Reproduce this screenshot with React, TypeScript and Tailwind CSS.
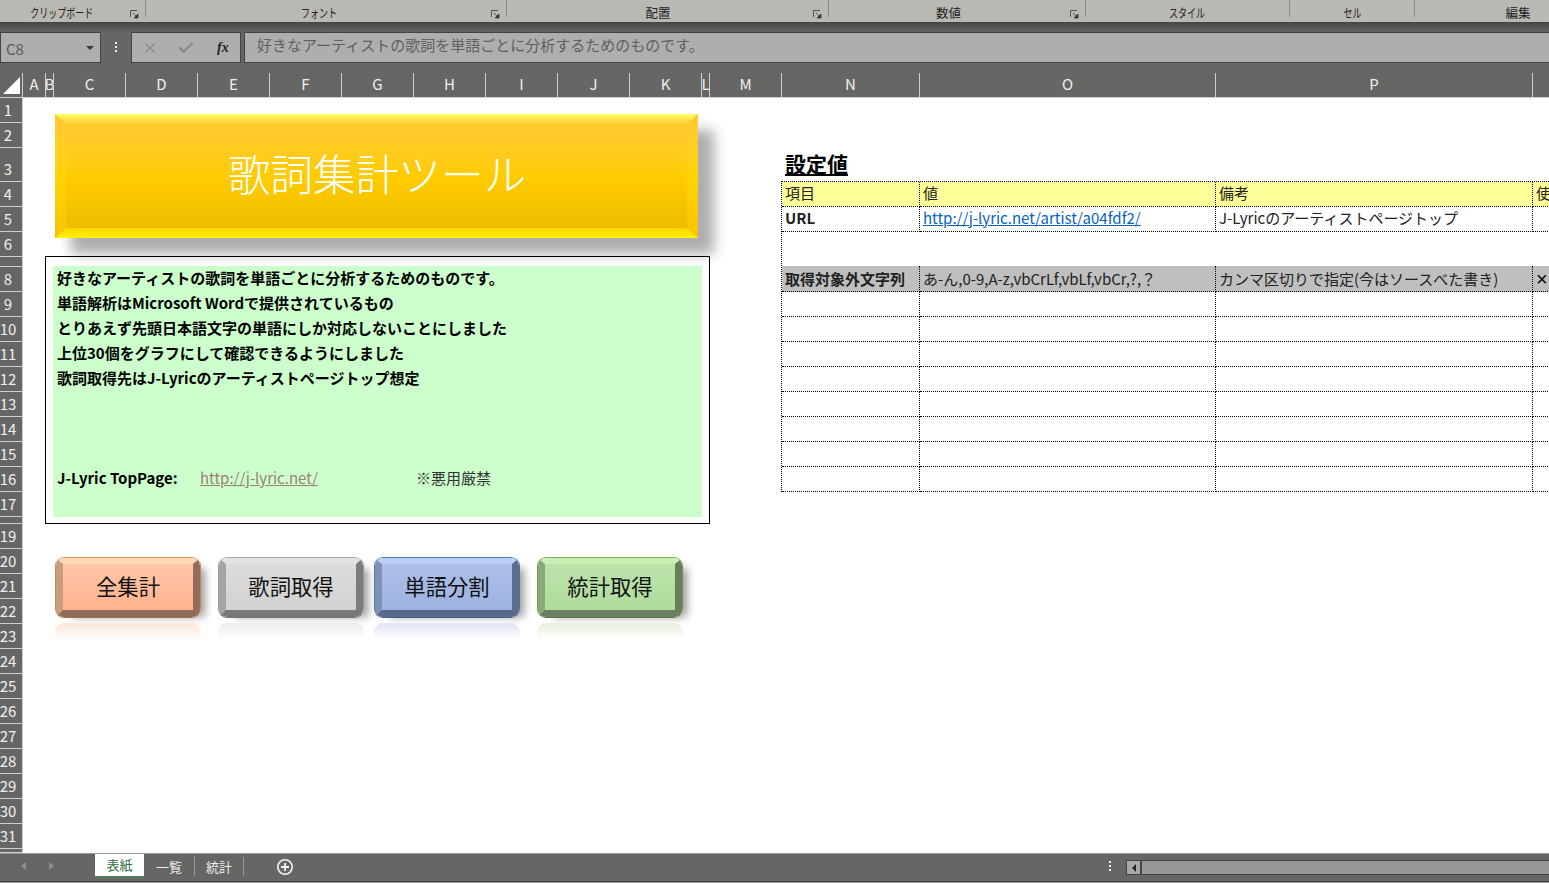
import { Check, X } from "lucide-react";

const ribbonGroups = [
    { label: "クリップボード", width: 146, launcher: true, narrow: true, shift: "pr-[22px]" },
    { label: "フォント", width: 361, launcher: true, narrow: true, shift: "pr-[14px]" },
    { label: "配置", width: 322, launcher: true, narrow: false, shift: "pr-[20px]" },
    { label: "数値", width: 257, launcher: true, narrow: false, shift: "pr-[18px]" },
    { label: "スタイル", width: 204, launcher: false, narrow: true, shift: "pr-[2px]" },
    { label: "セル", width: 125, launcher: false, narrow: true, shift: "" },
    { label: "編集", width: 134, launcher: false, narrow: false, shift: "pl-[72px]" },
];

const columns = [
    { name: "A", width: 23 },
    { name: "B", width: 8 },
    { name: "C", width: 72 },
    { name: "D", width: 72 },
    { name: "E", width: 72 },
    { name: "F", width: 72 },
    { name: "G", width: 72 },
    { name: "H", width: 72 },
    { name: "I", width: 72 },
    { name: "J", width: 72 },
    { name: "K", width: 72 },
    { name: "L", width: 8 },
    { name: "M", width: 72 },
    { name: "N", width: 138 },
    { name: "O", width: 296 },
    { name: "P", width: 317 },
];

const rowHeights: [string, number][] = [
    ["1", 25], ["2", 25], ["3", 34], ["4", 25], ["5", 25], ["6", 25], ["", 10],
    ["8", 25], ["9", 25], ["10", 25], ["11", 25], ["12", 25], ["13", 25], ["14", 25],
    ["15", 25], ["16", 25], ["17", 25], ["", 7], ["19", 25], ["20", 25], ["21", 25],
    ["22", 25], ["23", 25], ["24", 25], ["25", 25], ["26", 25], ["27", 25], ["28", 25],
    ["29", 25], ["30", 25], ["31", 25], ["", 4],
];

const descLines = [
    "好きなアーティストの歌詞を単語ごとに分析するためのものです。",
    "単語解析はMicrosoft Wordで提供されているもの",
    "とりあえず先頭日本語文字の単語にしか対応しないことにしました",
    "上位30個をグラフにして確認できるようにしました",
    "歌詞取得先はJ-Lyricのアーティストページトップ想定",
];

const buttons = [
    {
        label: "全集計",
        border: "border-t-[#f0994f] border-x-[#c98a50] border-b-[#a96f3d]",
        bevel: "border-t-[#ffd6b8] border-l-[#c89f7a] border-r-[#966a5c] border-b-[#8f6b58]",
        face: "from-[#ffc6a8] to-[#ffb28e]",
        reflect: "from-[#fbe6d6]",
    },
    {
        label: "歌詞取得",
        border: "border-t-[#aaaaaa] border-x-[#999999] border-b-[#777777]",
        bevel: "border-t-[#e2e2e2] border-l-[#a3a5a3] border-r-[#7b7d7b] border-b-[#777977]",
        face: "from-[#dcdcdc] to-[#d2d2d2]",
        reflect: "from-[#ececec]",
    },
    {
        label: "単語分割",
        border: "border-t-[#4f81bd] border-x-[#4a76aa] border-b-[#3f6691]",
        bevel: "border-t-[#bccef3] border-l-[#7f92b2] border-r-[#5e6b8c] border-b-[#586a8a]",
        face: "from-[#aebfe8] to-[#9db2e2]",
        reflect: "from-[#dfe4f5]",
    },
    {
        label: "統計取得",
        border: "border-t-[#80a85c] border-x-[#729650] border-b-[#5a7a44]",
        bevel: "border-t-[#c8efb4] border-l-[#8aa87a] border-r-[#687f5c] border-b-[#6a8060]",
        face: "from-[#bce3aa] to-[#b0dc9e]",
        reflect: "from-[#e6f0de]",
    },
];

const Launcher = () => (
    <svg width="9" height="9" viewBox="0 0 9 9" className="absolute right-[7px] top-[10px]">
        <path d="M0.5 7V0.5H7" fill="none" stroke="#555" />
        <path d="M3 3L7 7M8 4V8H4Z" fill="#333" stroke="#333" strokeWidth="0.7" />
    </svg>
);

const Ribbon = () => (
    <div className="flex h-[22px] bg-[#b9b8b3] text-[#222]">
        {ribbonGroups.map((group, i) => (
            <div
                key={group.label}
                style={{ width: group.width }}
                className={`relative flex shrink-0 justify-center ${group.shift}`}
            >
                <span
                    className={`inline-block pt-[4px] text-[12.5px] leading-[18px] ${group.narrow ? "scale-x-[0.72]" : ""}`}
                >
                    {group.label}
                </span>
                {group.launcher && <Launcher />}
                {i < ribbonGroups.length - 1 && (
                    <div className="absolute right-0 top-0 h-[17px] w-px bg-[#8c8b87]" />
                )}
            </div>
        ))}
    </div>
);

const FormulaBar = () => (
    <div className="flex h-[41px] items-start bg-[#666664]">
        <div className="flex h-[31px] w-[101px] shrink-0 items-center justify-between border border-[#444] bg-[#aeaeae] pl-[5px] pr-[6px] text-[15px] text-[#5a5a5a]">
            <span className="pt-[4px]">C8</span>
            <span className="h-0 w-0 border-x-[4px] border-t-[4px] border-x-transparent border-t-[#3c3c3c]" />
        </div>
        <div className="flex w-[30px] shrink-0 flex-col items-center gap-[2px] pt-[10px]">
            <span className="h-[2px] w-[2px] bg-[#eee]" />
            <span className="h-[2px] w-[2px] bg-[#eee]" />
            <span className="h-[2px] w-[2px] bg-[#eee]" />
        </div>
        <div className="flex h-[31px] w-[110px] shrink-0 items-center border border-[#444] bg-[#aeaeae] pl-[10px]">
            <X size={16} strokeWidth={1.75} className="text-[#858585]" />
            <Check size={18} strokeWidth={2.75} className="ml-[19px] text-[#858585]" />
            <span className="ml-[22px] font-['Liberation_Serif',serif] text-[14px] font-bold italic text-[#222]">
                fx
            </span>
        </div>
        <div className="ml-[3px] flex h-[31px] flex-1 items-center border border-[#444] border-r-0 bg-[#aeaeae] pb-[5px] pl-[12px] text-[15px] text-[#606060]">
            {descLines[0]}
        </div>
    </div>
);

const ColumnHeader = () => (
    <div className="flex h-[25px] border-b border-[#cfcfcf] bg-[#666664]">
        <div className="relative h-[24px] w-[23px] shrink-0 border-r border-[#cfcfcf]">
            <div className="absolute left-[3px] top-[4px] h-[17px] w-[17px] bg-white [clip-path:polygon(100%_0,100%_100%,0_100%)]" />
        </div>
        {columns.map((col) => (
            <div
                key={col.name}
                style={{ width: col.width }}
                className="flex shrink-0 items-center justify-center overflow-hidden border-r border-[#cfcfcf] pb-[4px] text-[15px] leading-none text-[#f0f0f0]"
            >
                {col.name}
            </div>
        ))}
    </div>
);

const RowHeader = () => (
    <div className="w-[23px] shrink-0 border-r border-[#cfcfcf] bg-[#666664]">
        {rowHeights.map(([name, height], i) => (
            <div
                key={i}
                style={{ height }}
                className="flex items-end justify-center overflow-hidden border-b border-[#cfcfcf] pr-[6px] text-[15px] leading-[15px] text-[#f0f0f0]"
            >
                {name && <span className="pb-[5px]">{name}</span>}
            </div>
        ))}
    </div>
);

const Banner = () => (
    <div className="relative flex h-[124px] w-[643px] items-center justify-center bg-linear-to-b from-[#ffc933] via-[#ffcc00] to-[#ecb900] pb-[6px] pl-[1px] shadow-[16px_16px_12px_rgba(0,0,0,0.32)]">
        <div className="absolute inset-x-0 top-0 h-[10px] bg-linear-to-b from-[#ffff66] to-[#ffca33] [clip-path:polygon(0_0,100%_0,calc(100%-10px)_100%,10px_100%)]" />
        <div className="absolute inset-x-0 bottom-0 h-[10px] bg-linear-to-b from-[#ffd400] to-[#fff200] [clip-path:polygon(10px_0,calc(100%-10px)_0,100%_100%,0_100%)]" />
        <div className="absolute inset-y-0 left-0 w-[11px] bg-linear-to-b from-[#ffc933] via-[#ffd400] to-[#f5c400] [clip-path:polygon(0_0,100%_10px,100%_calc(100%-10px),0_100%)]" />
        <div className="absolute inset-y-0 right-0 w-[11px] bg-linear-to-b from-[#ffc933] via-[#ffd400] to-[#f5c400] [clip-path:polygon(0_10px,100%_0,100%_100%,0_calc(100%-10px))]" />
        <span className="relative text-[42.67px] font-light leading-none text-white">
            歌詞集計ツール
        </span>
    </div>
);

const Description = () => (
    <div className="mt-[18px] h-[268px] w-[665px] border border-black bg-white px-[7px] pt-[9px]">
        <div className="h-[251px] bg-[#ccffcc] pl-[4px] text-[15px] leading-[25px] text-black">
            <div className="-translate-y-px">
                <div className="font-bold">
                    {descLines.map((line) => (
                        <div key={line} className="h-[25px] whitespace-nowrap">
                            {line}
                        </div>
                    ))}
                </div>
                <div className="mt-[75px] flex">
                    <span className="w-[143px] font-bold">J-Lyric TopPage:</span>
                    <span className="w-[216px] text-[#9c7f78] underline">http://j-lyric.net/</span>
                    <span className="text-[#333]">※悪用厳禁</span>
                </div>
            </div>
        </div>
    </div>
);

const ButtonRow = () => (
    <div className="mt-[33px] flex gap-[17px]">
        {buttons.map((btn, i) => (
            <div key={btn.label} className={`w-[146px] ${i === 2 ? "ml-[-7px]" : ""}`}>
                <div
                    className={`h-[61px] overflow-hidden rounded-[9px] border shadow-[10px_5px_8px_-6px_rgba(0,0,0,0.4)] ${btn.border}`}
                >
                    <div
                        className={`flex h-full items-center justify-center rounded-[7px] border-x-[7px] border-b-[7px] border-t-[6px] bg-linear-to-b pb-[2px] text-[21.33px] leading-none text-[#111] ${btn.bevel} ${btn.face}`}
                    >
                        {btn.label}
                    </div>
                </div>
                <div
                    className={`mt-[5px] h-[17px] rounded-t-[9px] bg-linear-to-b to-white ${btn.reflect}`}
                />
            </div>
        ))}
    </div>
);

const CELL = "flex items-center overflow-hidden whitespace-nowrap border-b border-r border-dotted border-black pl-[3px] text-[15px] leading-none text-[#222]";

const SettingRow = ({
    cells,
    bg = "",
    firstBold = false,
    tall = false,
    lift = false,
}: {
    cells: React.ReactNode[];
    bg?: string;
    firstBold?: boolean;
    tall?: boolean;
    lift?: boolean;
}) => (
    <div className={`grid grid-cols-[138px_296px_317px_17px] ${tall ? "h-[26px]" : "h-[25px]"} ${bg}`}>
        {cells.map((cell, i) => (
            <div
                key={i}
                className={`${CELL} ${i === 0 && firstBold ? "font-bold" : ""} ${lift ? "pb-[4px]" : ""}`}
            >
                {cell}
            </div>
        ))}
    </div>
);

const SettingsTable = () => (
    <div className="ml-[71px] w-[768px] shrink-0 pt-[49px]">
        <div className="flex h-[34px] items-end pb-[4px] pl-[4px]">
            <span className="text-[21px] font-bold leading-[28px] text-black underline">設定値</span>
        </div>
        <div className="border-l border-t border-dotted border-black">
            <SettingRow lift bg="bg-[#ffff99]" cells={["項目", "値", "備考", "使"]} />
            <SettingRow
                lift
                firstBold
                cells={[
                    "URL",
                    <span className="text-[#0563c1] underline">http://j-lyric.net/artist/a04fdf2/</span>,
                    "J-Lyricのアーティストページトップ",
                    "",
                ]}
            />
            <div className="h-[34px]" />
            <SettingRow
                tall
                bg="bg-[#bfbfbf]"
                firstBold
                cells={[
                    "取得対象外文字列",
                    "あ-ん,0-9,A-z,vbCrLf,vbLf,vbCr,?,？",
                    "カンマ区切りで指定(今はソースべた書き)",
                    <span className="font-['Liberation_Sans',sans-serif] text-[20px] text-black">×</span>,
                ]}
            />
            {Array.from({ length: 8 }).map((_, i) => (
                <SettingRow key={i} cells={["", "", "", ""]} />
            ))}
        </div>
    </div>
);

const TabBar = () => (
    <div className="h-[30px] bg-[#999]">
        <div className="flex h-[29px] items-start border-y border-t-[#999] border-b-[#3f3f3f] bg-[#666664] text-[13px] text-[#f0f0f0]">
            <div className="flex h-[24px] w-[95px] shrink-0 items-center pl-[21px]">
                <span className="h-0 w-0 border-y-[4px] border-r-[5px] border-y-transparent border-r-[#8f8f8d]" />
                <span className="ml-[23px] h-0 w-0 border-y-[4px] border-l-[5px] border-y-transparent border-l-[#8f8f8d]" />
            </div>
            <div className="flex h-[24px] w-[49px] shrink-0 items-center justify-center border-b-2 border-[#4f7a55] bg-white text-[#2f6b45]">
                表紙
            </div>
            <div className="mt-[3px] flex h-[19px] w-[51px] shrink-0 items-center justify-center border-r border-[#999]">一覧</div>
            <div className="mt-[3px] flex h-[19px] w-[49px] shrink-0 items-center justify-center border-r border-[#999]">統計</div>
            <svg width="18" height="18" viewBox="0 0 18 18" className="ml-[32px] mt-[4px] shrink-0">
                <circle cx="9" cy="9" r="7.2" fill="none" stroke="#f4f4f4" strokeWidth="1.6" />
                <path d="M9 5v8M5 9h8" stroke="#f4f4f4" strokeWidth="1.8" />
            </svg>
            <div className="ml-auto flex items-start">
                <div className="mr-[15px] flex flex-col gap-[2px] pt-[7px]">
                    <span className="h-[2px] w-[2px] bg-[#eee]" />
                    <span className="h-[2px] w-[2px] bg-[#eee]" />
                    <span className="h-[2px] w-[2px] bg-[#eee]" />
                </div>
                <div className="mt-[6px] flex h-[15px] w-[423px] border-y border-l border-[#444] bg-[#969694]">
                    <div className="flex w-[15px] items-center justify-center border-r-2 border-[#444] bg-[#a8a8a6]">
                        <span className="h-0 w-0 border-y-[4px] border-r-[4px] border-y-transparent border-r-[#222]" />
                    </div>
                </div>
            </div>
        </div>
    </div>
);

export default function App() {
    return (
        <div className="flex h-[883px] w-[1549px] flex-col overflow-hidden bg-white font-['Noto_Sans_CJK_JP',sans-serif]">
            <Ribbon />
            <div className="h-[10px] bg-linear-to-b from-[#444442] to-[#666664]" />
            <FormulaBar />
            <ColumnHeader />
            <div className="flex h-[755px]">
                <RowHeader />
                <div className="flex flex-1">
                    <div className="ml-[32px] flex w-[655px] shrink-0 flex-col pt-[16px]">
                        <Banner />
                        <div className="ml-[-10px]">
                            <Description />
                        </div>
                        <ButtonRow />
                    </div>
                    <SettingsTable />
                </div>
            </div>
            <TabBar />
        </div>
    );
}
